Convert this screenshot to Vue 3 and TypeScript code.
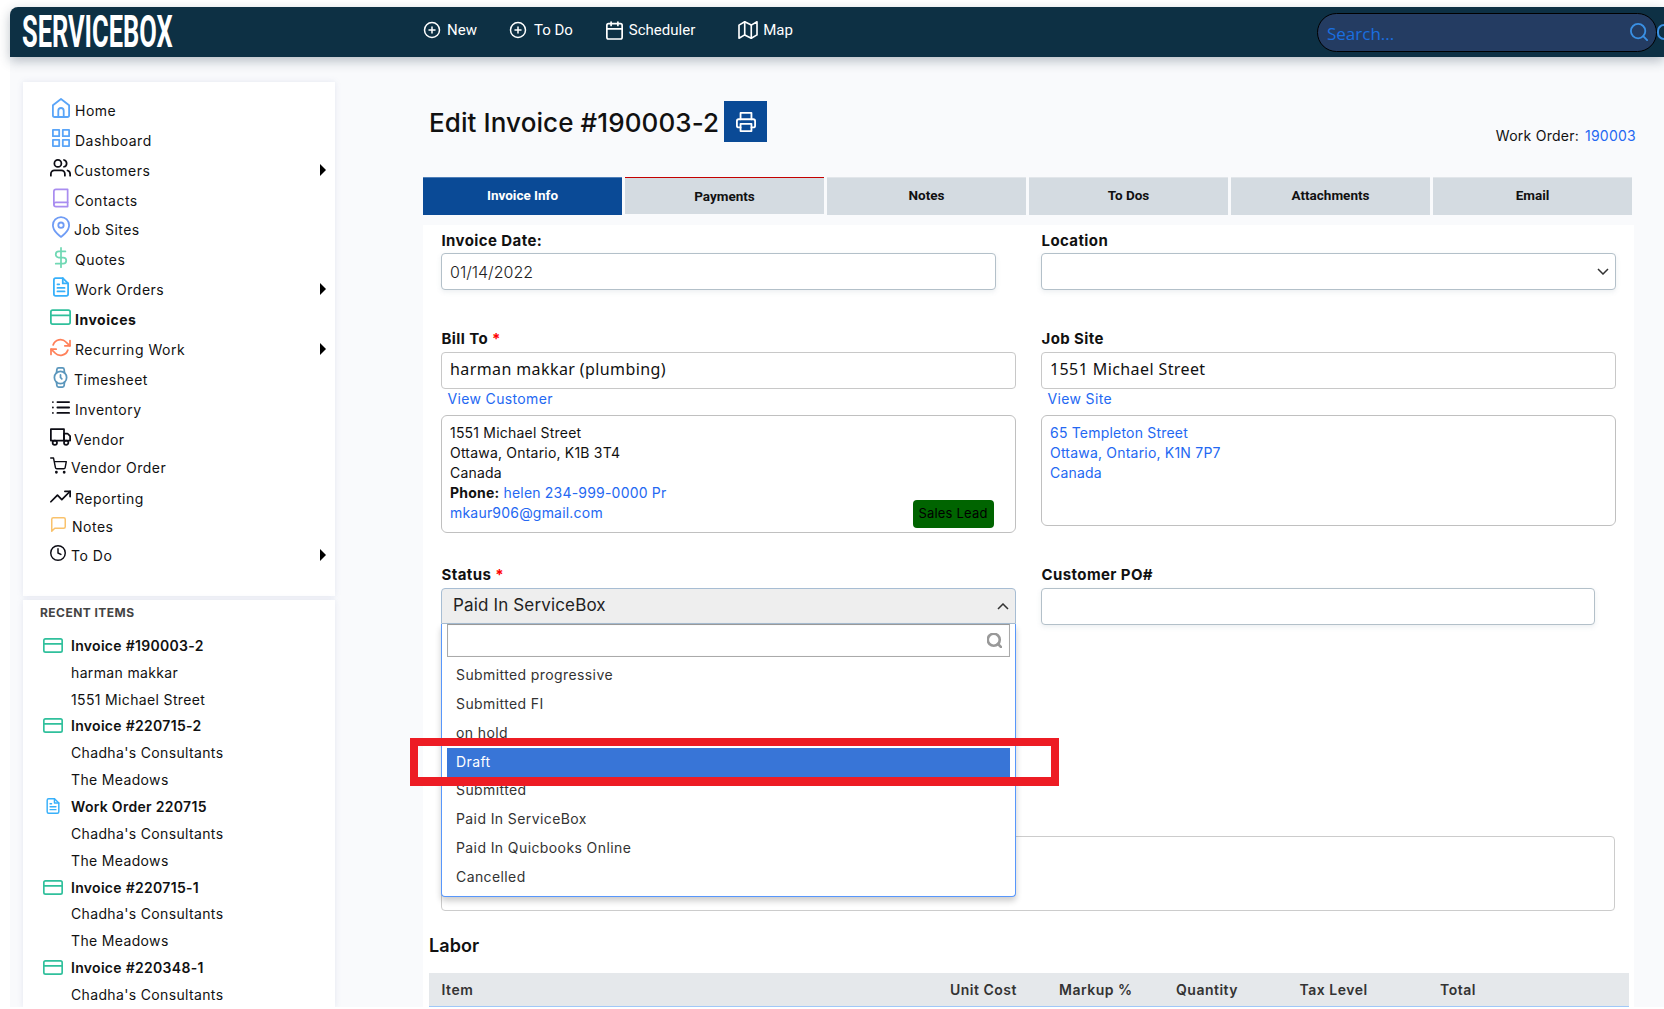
<script setup lang="ts">
const P: Record<string, string[]> = {
  home: ['M3 9l9-7 9 7v11a2 2 0 0 1-2 2H5a2 2 0 0 1-2-2z', 'M9 22v-7a3 3 0 0 1 6 0v7'],
  grid: ['M3 3h7v7H3z', 'M14 3h7v7h-7z', 'M14 14h7v7h-7z', 'M3 14h7v7H3z'],
  users: ['M17 21v-2a4 4 0 0 0-4-4H5a4 4 0 0 0-4 4v2', 'M5 7a4 4 0 1 0 8 0a4 4 0 1 0-8 0', 'M23 21v-2a4 4 0 0 0-3-3.87', 'M16 3.13a4 4 0 0 1 0 7.75'],
  book: ['M4 19.5A2.5 2.5 0 0 1 6.5 17H20', 'M6.5 2H20v20H6.5A2.5 2.5 0 0 1 4 19.5v-15A2.5 2.5 0 0 1 6.5 2z'],
  pin: ['M21 10c0 7-9 13-9 13s-9-6-9-13a9 9 0 0 1 18 0z', 'M9 10a3 3 0 1 0 6 0a3 3 0 1 0-6 0'],
  dollar: ['M12 1v22', 'M17 5H9.5a3.5 3.5 0 0 0 0 7h5a3.5 3.5 0 0 1 0 7H6'],
  file: ['M14 2H6a2 2 0 0 0-2 2v16a2 2 0 0 0 2 2h12a2 2 0 0 0 2-2V8z', 'M14 2v6h6', 'M16 13H8', 'M16 17H8', 'M10 9H8'],
  card: ['M3 4h18a2 2 0 0 1 2 2v12a2 2 0 0 1-2 2H3a2 2 0 0 1-2-2V6a2 2 0 0 1 2-2z', 'M1 10h22'],
  refresh: ['M23 4v6h-6', 'M1 20v-6h6', 'M3.51 9a9 9 0 0 1 14.85-3.36L23 10', 'M1 14l4.64 4.36A9 9 0 0 0 20.49 15'],
  watch: ['M5 12a7 7 0 1 0 14 0a7 7 0 1 0-14 0', 'M12 9v3l1.5 1.5', 'M16.51 17.35l-.35 3.83a2 2 0 0 1-2 1.82H9.83a2 2 0 0 1-2-1.82l-.35-3.83m.01-10.7l.35-3.83A2 2 0 0 1 9.83 1h4.35a2 2 0 0 1 2 1.82l.35 3.83'],
  list: ['M8 6h13', 'M8 12h13', 'M8 18h13', 'M3 6h.01', 'M3 12h.01', 'M3 18h.01'],
  truck: ['M1 3h15v13H1z', 'M16 8h4l3 3v5h-7V8z', 'M3 18.5a2.5 2.5 0 1 0 5 0a2.5 2.5 0 1 0-5 0', 'M16 18.5a2.5 2.5 0 1 0 5 0a2.5 2.5 0 1 0-5 0'],
  cart: ['M8 21a1 1 0 1 0 2 0a1 1 0 1 0-2 0', 'M19 21a1 1 0 1 0 2 0a1 1 0 1 0-2 0', 'M1 1h4l2.68 13.39a2 2 0 0 0 2 1.61h9.72a2 2 0 0 0 2-1.61L23 6H6'],
  trend: ['M23 6l-9.5 9.5-5-5L1 18', 'M17 6h6v6'],
  msg: ['M21 15a2 2 0 0 1-2 2H7l-4 4V5a2 2 0 0 1 2-2h14a2 2 0 0 1 2 2z'],
  clock: ['M2 12a10 10 0 1 0 20 0a10 10 0 1 0-20 0', 'M12 6v6l4 2'],
  plus: ['M2 12a10 10 0 1 0 20 0a10 10 0 1 0-20 0', 'M12 8v8', 'M8 12h8'],
  calendar: ['M5 4h14a2 2 0 0 1 2 2v14a2 2 0 0 1-2 2H5a2 2 0 0 1-2-2V6a2 2 0 0 1 2-2z', 'M16 2v4', 'M8 2v4', 'M3 10h18'],
  map: ['M1 6v16l7-4 8 4 7-4V2l-7 4-8-4-7 4z', 'M8 2v16', 'M16 6v16'],
  search: ['M3 11a8 8 0 1 0 16 0a8 8 0 1 0-16 0', 'M21 21l-4.35-4.35'],
  printer: ['M6 9V2h12v7', 'M6 18H4a2 2 0 0 1-2-2v-5a2 2 0 0 1 2-2h16a2 2 0 0 1 2 2v5a2 2 0 0 1-2 2h-2', 'M6 14h12v8H6z'],
}

interface Nav { label: string; icon: string; color: string; vb: string; w: number; h: number; x: number; tx: number; dy?: number; arrow?: boolean; bold?: boolean }
const nav: Nav[] = [
  { label: 'Home', icon: 'home', color: '#5aa5f8', vb: '2 1 20 22', w: 18, h: 20, x: 2, tx: 25 },
  { label: 'Dashboard', icon: 'grid', color: '#5aa5f8', vb: '2 2 20 20', w: 18, h: 18, x: 2, tx: 25 },
  { label: 'Customers', icon: 'users', color: '#0c0c14', vb: '0 2 24 20', w: 21, h: 17.5, x: 0, tx: 24, arrow: true },
  { label: 'Contacts', icon: 'book', color: '#a98df0', vb: '3 1 18 22', w: 15.5, h: 20, x: 3, tx: 24.5 },
  { label: 'Job Sites', icon: 'pin', color: '#6f9cf5', vb: '2 0 20 24', w: 18, h: 22, x: 2, tx: 24, dy: -1 },
  { label: 'Quotes', icon: 'dollar', color: '#70d8b4', vb: '4 0 16 24', w: 14, h: 21, x: 4, tx: 25 },
  { label: 'Work Orders', icon: 'file', color: '#38b0fa', vb: '3 1 18 22', w: 16, h: 20, x: 3, tx: 25, arrow: true },
  { label: 'Invoices', icon: 'card', color: '#30c09c', vb: '0 3 24 18', w: 21, h: 16, x: 0, tx: 25, bold: true },
  { label: 'Recurring Work', icon: 'refresh', color: '#ff8059', vb: '0 1 24 22', w: 21, h: 19, x: 0, tx: 25, arrow: true },
  { label: 'Timesheet', icon: 'watch', color: '#5a96bc', vb: '4 0 16 24', w: 15, h: 21, x: 3, tx: 24 },
  { label: 'Inventory', icon: 'list', color: '#0c0c14', vb: '2 5 20 14', w: 18, h: 13, x: 2, tx: 25 },
  { label: 'Vendor', icon: 'truck', color: '#0c0c14', vb: '0 2 24 20', w: 21, h: 18, x: 0, tx: 24 },
  { label: 'Vendor Order', icon: 'cart', color: '#0c0c14', vb: '0 0 24 23', w: 17, h: 17, x: 0, tx: 21, dy: -2 },
  { label: 'Reporting', icon: 'trend', color: '#0c0c14', vb: '0 5 24 14', w: 21, h: 13, x: 0, tx: 25, dy: 1 },
  { label: 'Notes', icon: 'msg', color: '#f9c26c', vb: '2 2 20 20', w: 15, h: 15, x: 1, tx: 22, dy: -2 },
  { label: 'To Do', icon: 'clock', color: '#0c0c14', vb: '1 1 22 22', w: 16, h: 16, x: 0, tx: 21, dy: -1, arrow: true },
]

const recent = [
  { icon: 'card', title: 'Invoice #190003-2', lines: ['harman makkar', '1551 Michael Street'] },
  { icon: 'card', title: 'Invoice #220715-2', lines: ["Chadha's Consultants", 'The Meadows'] },
  { icon: 'file', title: 'Work Order 220715', lines: ["Chadha's Consultants", 'The Meadows'] },
  { icon: 'card', title: 'Invoice #220715-1', lines: ["Chadha's Consultants", 'The Meadows'] },
  { icon: 'card', title: 'Invoice #220348-1', lines: ["Chadha's Consultants"] },
]

const tabs = ['Invoice Info', 'Payments', 'Notes', 'To Dos', 'Attachments', 'Email']
const options = ['Submitted progressive', 'Submitted FI', 'on hold', 'Draft', 'Submitted', 'Paid In ServiceBox', 'Paid In Quicbooks Online', 'Cancelled']
const heads = ['Item', 'Unit Cost', 'Markup %', 'Quantity', 'Tax Level', 'Total']
</script>

<template>
  <div class="root">
    <header class="topbar">
      <div class="logo"><span>SERVICEBOX</span></div>
      <nav class="topnav">
        <a class="tn tn-new"><svg class="ic" viewBox="0 0 24 24" width="18" height="18"><path v-for="d in P.plus" :key="d" :d="d" /></svg>New</a>
        <a class="tn tn-todo"><svg class="ic" viewBox="0 0 24 24" width="18" height="18"><path v-for="d in P.plus" :key="d" :d="d" /></svg>To Do</a>
        <a class="tn tn-sched"><svg class="ic" viewBox="2 1 20 22" width="17" height="19"><path v-for="d in P.calendar" :key="d" :d="d" /></svg>Scheduler</a>
        <a class="tn tn-map"><svg class="ic" viewBox="0 1 24 22" width="20" height="18"><path v-for="d in P.map" :key="d" :d="d" /></svg>Map</a>
      </nav>
      <div class="search">
        <span class="ph">Search...</span>
        <svg class="ic s-ic" viewBox="2 2 20 20" width="18" height="18"><path v-for="d in P.search" :key="d" :d="d" /></svg>
      </div>
      <span class="avatar"></span>
    </header>

    <div class="body">
      <aside class="side">
        <div class="panel navcard">
          <a v-for="n in nav" :key="n.label" class="nrow" :class="{ bold: n.bold }" :style="{ marginTop: (n.dy || 0) + 'px' }">
            <span class="nic" :style="{ width: n.tx + 'px' }">
              <svg class="ic" :viewBox="n.vb" :width="n.w" :height="n.h" :style="{ marginLeft: n.x + 'px', color: n.color }"><path v-for="d in P[n.icon]" :key="d" :d="d" /></svg>
            </span>
            <span>{{ n.label }}</span>
            <i v-if="n.arrow" class="tri"></i>
          </a>
        </div>
        <div class="panel recent">
          <div class="rhead">RECENT ITEMS</div>
          <div v-for="r in recent" :key="r.title" class="ritem">
            <div class="rrow rtitle">
              <span class="ric">
                <svg v-if="r.icon === 'card'" class="ic" viewBox="0 3 24 18" width="20" height="15" color="#30c09c"><path v-for="d in P.card" :key="d" :d="d" /></svg>
                <svg v-else class="ic" viewBox="3 1 18 22" width="14" height="16" color="#38b0fa"><path v-for="d in P.file" :key="d" :d="d" /></svg>
              </span>{{ r.title }}
            </div>
            <div v-for="l in r.lines" :key="l" class="rrow rsub">{{ l }}</div>
          </div>
        </div>
      </aside>

      <main class="main">
        <div class="titlerow">
          <h1>Edit Invoice #190003-2</h1>
          <button class="print"><svg class="ic" viewBox="1 1 22 22" width="20" height="20"><path v-for="d in P.printer" :key="d" :d="d" /></svg></button>
          <div class="wo">Work Order:<a class="link">190003</a></div>
        </div>

        <div class="tabs">
          <div v-for="(t, i) in tabs" :key="t" class="tab" :class="{ active: i === 0, pay: i === 1 }">{{ t }}</div>
        </div>

        <section class="card">
          <div class="form">
            <div class="grid row1">
              <div>
                <label>Invoice Date:</label>
                <div class="inp date">01/14/2022</div>
              </div>
              <div>
                <label>Location</label>
                <div class="inp sel">
                  <svg class="chev" viewBox="0 0 12 7" width="12" height="7"><path d="M1 1l5 5 5-5" /></svg>
                </div>
              </div>
            </div>

            <div class="grid row2">
              <div>
                <label>Bill To <em>*</em></label>
                <div class="inp plain">harman makkar (plumbing)</div>
                <a class="link sub">View Customer</a>
                <div class="box">
                  <div>1551 Michael Street</div>
                  <div>Ottawa, Ontario, K1B 3T4</div>
                  <div>Canada</div>
                  <div><b>Phone:</b> <a class="link">helen 234-999-0000 Pr</a></div>
                  <div><a class="link">mkaur906@gmail.com</a></div>
                  <span class="badge">Sales Lead</span>
                </div>
              </div>
              <div>
                <label>Job Site</label>
                <div class="inp plain">1551 Michael Street</div>
                <a class="link sub">View Site</a>
                <div class="box site">
                  <div class="link">65 Templeton Street</div>
                  <div class="link">Ottawa, Ontario, K1N 7P7</div>
                  <div class="link">Canada</div>
                </div>
              </div>
            </div>

            <div class="grid row3">
              <div class="status">
                <label>Status <em>*</em></label>
                <div class="selected">
                  Paid In ServiceBox
                  <svg class="chev" viewBox="0 0 12 7" width="12" height="7"><path d="M1 6l5-5 5 5" /></svg>
                </div>
                <div class="drop">
                  <div class="dsearch">
                    <svg class="ic ds-ic" viewBox="2 2 20 20" width="15" height="15"><path v-for="d in P.search" :key="d" :d="d" /></svg>
                  </div>
                  <ul>
                    <li v-for="o in options" :key="o" :class="{ hi: o === 'Draft' }">{{ o }}</li>
                  </ul>
                </div>
              </div>
              <div>
                <label>Customer PO#</label>
                <div class="inp po"></div>
              </div>
            </div>

            <div class="notes"></div>
          </div>

          <h2>Labor</h2>
          <div class="thead">
            <span v-for="h in heads" :key="h">{{ h }}</span>
          </div>
        </section>
      </main>
    </div>
    <div class="annot"></div>
  </div>
</template>

<style>
html, body { margin: 0; background: #fff; }
</style>

<style scoped>
* { box-sizing: border-box; }
.root {
  position: relative;
  width: 1664px;
  height: 1009px;
  overflow: hidden;
  padding: 7px 0 0 10px;
  background: #fff;
  font-family: Inter, "Liberation Sans", sans-serif;
  font-size: 14px;
  letter-spacing: 0.35px;
  color: #111;
}
.ic { fill: none; stroke: currentColor; stroke-width: 2; stroke-linecap: round; stroke-linejoin: round; flex: none; }

.topbar {
  position: relative;
  z-index: 2;
  display: flex;
  align-items: center;
  height: 50px;
  padding-left: 12px;
  background: #0d3044;
  border-top-left-radius: 8px;
  box-shadow: 0 4px 12px rgba(30, 50, 70, 0.3);
  color: #fff;
}
.logo { flex: none; width: 151px; height: 50px; }
.logo span {
  display: block;
  width: 151px;
  font: 700 45px/50px Roboto, sans-serif;
  letter-spacing: 0;
  transform: scaleX(0.565);
  transform-origin: left center;
  white-space: nowrap;
}
.topnav { display: flex; margin: 0 0 4px 250px; font: 400 15px/20px Roboto, sans-serif; letter-spacing: 0; }
.tn { display: flex; align-items: center; gap: 6px; }
.tn-todo { margin-left: 32px; gap: 7px; }
.tn-sched { margin-left: 33px; }
.tn-map { margin-left: 43px; gap: 5px; }
.search {
  display: flex;
  align-items: center;
  justify-content: space-between;
  width: 340px;
  height: 39px;
  margin-left: auto;
  padding: 0 8px 0 9px;
  border: 1px solid #000;
  border-radius: 20px;
  background: #243c62;
  color: #1a6fe0;
  font: 400 17px "Open Sans", sans-serif;
  letter-spacing: 0;
}
.ph { padding-top: 2px; }
.s-ic { color: #3a90e4; }
.avatar {
  width: 7px;
  height: 16px;
  border: 2px solid #3a90e4;
  border-right: 0;
  border-radius: 8px 0 0 8px;
}

.body { display: flex; height: 950px; overflow: hidden; background: #f9fafc; }
.side { width: 325px; flex: none; padding: 25px 0 0 13px; }
.panel { background: #fff; box-shadow: 0 0 6px rgba(120, 130, 180, 0.16); }
.navcard { height: 514px; padding: 13px 9px 0 27px; letter-spacing: 0.5px; }
.nrow { display: flex; align-items: center; height: 30px; }
.nrow.bold { font-weight: 700; }
.nic { display: flex; align-items: center; flex: none; transform: translateY(-2px); }
.tri {
  margin-left: auto;
  border-left: 6px solid #000;
  border-top: 6px solid transparent;
  border-bottom: 6px solid transparent;
}
.recent { height: 407px; margin-top: 4px; padding: 3px 0 0 17px; }
.rhead { font-size: 12px; font-weight: 700; line-height: 20px; color: #444; margin-bottom: 9px; letter-spacing: 0.45px; }
.rrow { display: flex; align-items: center; height: 26.85px; padding-left: 31px; }
.rtitle { padding-left: 3px; font-weight: 600; letter-spacing: 0.3px; }
.ric { display: flex; justify-content: center; width: 20px; margin-right: 8px; }

.main { width: 1211px; flex: none; margin-left: 88px; padding-top: 44px; }
.titlerow { display: flex; align-items: center; height: 41px; padding-left: 6px; }
h1 { margin: 2px 5px 0 0; font-size: 26px; font-weight: 500; letter-spacing: 0.1px; color: #111; }
.print {
  display: flex; align-items: center; justify-content: center;
  width: 43px; height: 41px; padding: 0; border: 0;
  background: #0a4a96; color: #fff;
}
.wo { display: flex; gap: 6px; align-self: flex-end; margin: 0 -2px -4px auto; line-height: 20px; letter-spacing: 0.25px; }
.link { color: #2468f2; }

.tabs { display: grid; grid-template-columns: repeat(6, 199px); gap: 3px; margin-top: 35px; align-items: start; }
.tab {
  height: 38px;
  display: flex; align-items: center; justify-content: center;
  padding-bottom: 3px;
  background: #d4dbe1;
  border-top: 1px solid #e2e6ea;
  font: 700 13.5px Roboto, sans-serif;
  letter-spacing: 0;
  color: #111;
}
.tab.active { background: #0a4a96; border-top-color: #4f7fb8; color: #fff; }
.tab.pay { height: 37px; border-top-color: #c40000; padding-bottom: 1px; }

.card { height: 782px; margin-top: 10px; padding: 6px 5px 0 6px; background: #fff; }
.form { padding-left: 12px; }
.grid { display: grid; grid-template-columns: 574.5px 574.5px; gap: 25.5px; align-items: start; }
.row1 { height: 58px; }
.row2 { margin-top: 40px; }
.row3 { margin-top: 32px; }
label { display: block; height: 22px; padding-left: 0.5px; line-height: 20px; font-size: 15px; font-weight: 700; letter-spacing: 0.4px; color: #111; }
label em { font-style: normal; color: #f00; }
.row2 label, .row3 label { height: 23px; }
.inp {
  position: relative;
  height: 37px;
  padding: 0 8px;
  border: 1px solid #b3c0c9;
  border-radius: 4px;
  background: #fff;
  line-height: 35px;
  box-shadow: 0 2px 5px rgba(100, 120, 140, 0.12);
}
.date { width: 555px; font-size: 16px; font-weight: 300; letter-spacing: 0; line-height: 36px; color: #222; }
.po { width: 554px; }
.plain {
  height: 37px;
  border-color: #c8c8c8;
  box-shadow: none;
  font: 400 16px/32px "Noto Sans", sans-serif;
  letter-spacing: 0.4px;
  color: #111;
}
.chev { position: absolute; fill: none; stroke: #333; stroke-width: 1.5; right: 6px; top: 14px; }
.sub { display: block; height: 26px; padding-left: 6.5px; line-height: 20px; }
.box {
  position: relative;
  height: 118px;
  padding: 7px 8px;
  border: 1px solid #c0c0c0;
  border-radius: 6px;
  line-height: 20px;
  letter-spacing: 0.2px;
}
.box.site { height: 111px; }
.box b { font-weight: 700; }
.badge {
  position: absolute;
  right: 21px;
  bottom: 4px;
  width: 81px;
  height: 28px;
  border-radius: 4px;
  background: #006400;
  color: #000;
  text-align: center;
  font-size: 13px;
  line-height: 27px;
}
.status { position: relative; }
.selected {
  position: relative;
  height: 36px;
  padding-left: 11px;
  border: 1px solid #a7bdd3;
  border-radius: 4px 4px 0 0;
  background: #eee;
  font-size: 17px;
  line-height: 33px;
  letter-spacing: 0.15px;
  color: #222;
}
.selected .chev { right: 6px; top: 14px; }
.drop {
  position: absolute;
  z-index: 3;
  left: 0;
  top: 59px;
  width: 574.5px;
  height: 273px;
  border: 1px solid #5897fb;
  border-top: 0;
  border-radius: 0 0 4px 4px;
  background: #fff;
  box-shadow: 0 4px 6px rgba(0, 0, 0, 0.2);
}
.dsearch {
  position: relative;
  height: 33px;
  margin: 0 5px 0 5px;
  border: 1px solid #aaa;
  border-top-color: #999;
  box-shadow: inset 0 0 2px rgba(0, 0, 0, 0.05);
}
.ds-ic { position: absolute; right: 7px; top: 8px; color: #999; stroke-width: 3.5; }
ul { margin: 4px 5px 0 5px; padding: 0; list-style: none; }
li { height: 29px; padding-left: 9px; line-height: 27px; letter-spacing: 0.4px; color: #333; }
li.hi { background: #3875d7; color: #fff; }
li.hi ~ li { line-height: 25px; }
.notes { width: 1173.5px; height: 75px; margin-top: 211px; border: 1px solid #ccc; border-radius: 4px; }
h2 { margin: 23px 0 15px; font-size: 18px; line-height: 24px; font-weight: 600; letter-spacing: 0.1px; color: #111; }
.thead {
  display: grid;
  grid-template-columns: 508.5px 109px 117px 123.5px 140.5px 1fr;
  align-items: center;
  height: 34px;
  padding-left: 12.5px;
  background: #e5e8eb;
  border-bottom: 1px solid #a0c8f8;
  font-weight: 600;
  letter-spacing: 0.5px;
  color: #333;
}
.annot {
  position: absolute;
  z-index: 5;
  left: 410px;
  top: 738px;
  width: 649px;
  height: 48px;
  border: 8px solid #ed1c24;
  border-bottom-width: 9px;
}
</style>
